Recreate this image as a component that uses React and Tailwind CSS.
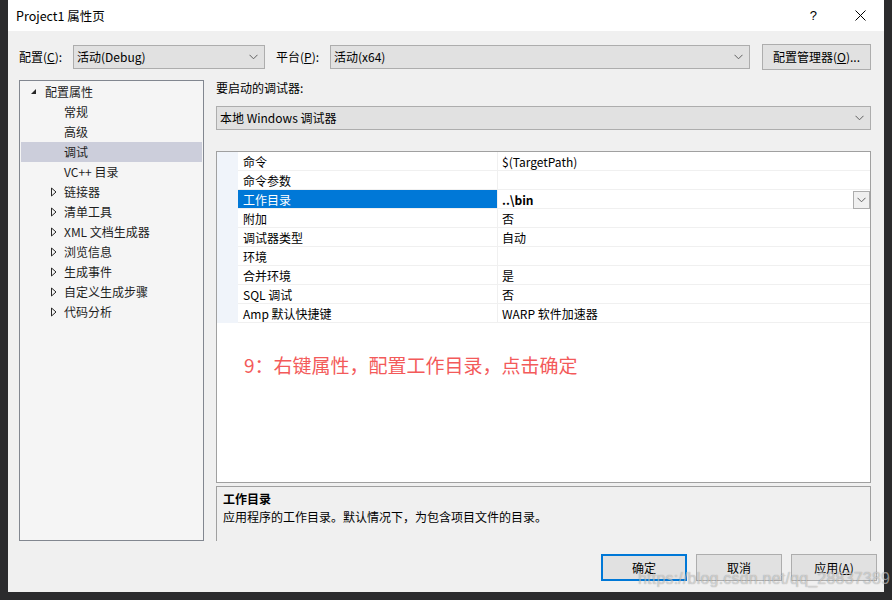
import React from "react";

const F = { fontFamily: '"Noto Sans CJK SC", "Noto Sans", sans-serif' };

function Chevron({ className = "" }) {
  return (
    <svg width="9" height="6" viewBox="0 0 9 6" className={className}>
      <path d="M0.5 0.8 L4.5 4.8 L8.5 0.8" fill="none" stroke="#606060" strokeWidth="1" />
    </svg>
  );
}

function Select({ text, w }) {
  return (
    <div className={`${w} h-[24px] border border-[#adadad] bg-[#e1e1e1] flex items-center justify-between pl-[3px] pr-[6px]`}>
      <span className="text-[12px] leading-[16px] text-black">{text}</span>
      <Chevron />
    </div>
  );
}

function Expanded() {
  return (
    <svg width="8" height="8" viewBox="0 0 8 8">
      <path d="M6 1 L6 6 L1 6 Z" fill="#262626" />
    </svg>
  );
}
function Collapsed() {
  return (
    <svg width="8" height="10" viewBox="0 0 8 10">
      <path d="M1.5 1 L6 5 L1.5 9 Z" fill="none" stroke="#262626" strokeWidth="1" />
    </svg>
  );
}

const tree = [
  { t: "配置属性", lvl: 0, ic: "exp" },
  { t: "常规", lvl: 1 },
  { t: "高级", lvl: 1 },
  { t: "调试", lvl: 1, sel: true },
  { t: "VC++ 目录", lvl: 1 },
  { t: "链接器", lvl: 1, ic: "col" },
  { t: "清单工具", lvl: 1, ic: "col" },
  { t: "XML 文档生成器", lvl: 1, ic: "col" },
  { t: "浏览信息", lvl: 1, ic: "col" },
  { t: "生成事件", lvl: 1, ic: "col" },
  { t: "自定义生成步骤", lvl: 1, ic: "col" },
  { t: "代码分析", lvl: 1, ic: "col" },
];

const props = [
  ["命令", "$(TargetPath)"],
  ["命令参数", ""],
  ["工作目录", "..\\bin", true],
  ["附加", "否"],
  ["调试器类型", "自动"],
  ["环境", ""],
  ["合并环境", "是"],
  ["SQL 调试", "否"],
  ["Amp 默认快捷键", "WARP 软件加速器"],
];

function Btn({ children, primary }) {
  return (
    <div
      className={`w-[86px] h-[27px] flex items-center justify-center text-[12px] text-black bg-[#e1e1e1] ${
        primary ? "border-2 border-[#0078d7]" : "border border-[#adadad]"
      }`}
    >
      {children}
    </div>
  );
}

export default function App() {
  return (
    <div className="w-[892px] h-[600px] bg-[#2b2b2d] pl-[8px] overflow-hidden relative" style={F}>
      <div className="w-[876px] h-[592px] flex flex-col bg-[#f0f0f0]">
        {/* title bar */}
        <div className="h-[31px] bg-white flex items-center pl-[8px] shrink-0">
          <span className="text-[12.5px] text-black leading-[16px]">Project1 属性页</span>
          <div className="flex-1" />
          <span className="text-[13px] text-black mr-[38px]" style={{ fontFamily: '"Liberation Sans", sans-serif' }}>?</span>
          <svg width="11" height="11" viewBox="0 0 11 11" className="mr-[18px]">
            <path d="M0.5 0.5 L10.5 10.5 M10.5 0.5 L0.5 10.5" stroke="#000" strokeWidth="1" />
          </svg>
        </div>

        {/* body */}
        <div className="flex-1 flex flex-col pl-[11px] pr-[13px] pt-[13px]">
          {/* top row */}
          <div className="h-[26px] flex items-center">
            <span className="w-[54px] text-[12px] text-black">
              配置(<span className="underline">C</span>):
            </span>
            <Select text="活动(Debug)" w="w-[192px]" />
            <span className="w-[54px] ml-[11px] text-[12px] text-black">
              平台(<span className="underline">P</span>):
            </span>
            <Select text="活动(x64)" w="w-[420px]" />
            <div className="ml-[12px] w-[109px] h-[26px] border border-[#adadad] bg-[#e1e1e1] flex items-center justify-center text-[12px] text-black">
              配置管理器(<span className="underline">O</span>)...
            </div>
          </div>

          {/* main */}
          <div className="mt-[10px] h-[461px] flex">
            {/* tree */}
            <div className="w-[186px] h-full border border-[#828790] bg-[#f5f5f5] p-px">
              {tree.map((it, i) => (
                <div
                  key={i}
                  className={`h-[20px] flex items-center relative ${it.sel ? "bg-[#cccedb]" : ""}`}
                >
                  {it.ic === "exp" && (
                    <span className="absolute left-[9px] top-[6px]">
                      <Expanded />
                    </span>
                  )}
                  {it.ic === "col" && (
                    <span className="absolute left-[29px] top-[5px]">
                      <Collapsed />
                    </span>
                  )}
                  <span
                    className={`text-[12px] leading-[16px] text-[#1e1e1e] ${it.lvl === 0 ? "ml-[24px]" : "ml-[43px]"}`}
                  >
                    {it.t}
                  </span>
                </div>
              ))}
            </div>

            {/* right */}
            <div className="ml-[12px] w-[655px] flex flex-col">
              <div className="h-[16px] text-[12px] leading-[16px] text-black">要启动的调试器:</div>
              <div className="mt-[10px]">
                <Select text="本地 Windows 调试器" w="w-[655px]" />
              </div>
              <div className="mt-[21px] h-[332px] border border-[#a0a0a0] bg-white flex flex-col">
                {props.map(([n, v, sel], i) => (
                  <div key={i} className="h-[19px] flex">
                    <div className="w-[21px] bg-[#f0f4fa]" />
                    <div
                      className={`w-[260px] border-b border-r border-[#f0f0f0] flex items-center pl-[5px] pt-px text-[12px] leading-[16px] ${
                        sel ? "bg-[#0078d7] text-white" : "text-black"
                      }`}
                    >
                      {n}
                    </div>
                    <div className="flex-1 border-b border-[#f0f0f0] flex items-center pl-[4px] pt-px text-[12px] leading-[16px] text-black">
                      <span className={sel ? "font-bold" : ""}>{v}</span>
                      {sel && (
                        <>
                          <div className="flex-1" />
                          <div className="w-[17px] h-[18px] border border-[#adadad] bg-[#f0f0f0] flex items-center justify-center">
                            <Chevron />
                          </div>
                        </>
                      )}
                    </div>
                  </div>
                ))}
                <div className="flex-1 relative">
                  <div className="ml-[27px] mt-[30px] text-[19px] leading-[24px] text-[#f35a5a]">
                    9：右键属性，配置工作目录，点击确定
                  </div>
                </div>
              </div>
              <div className="mt-[3px] flex-1 border border-b-0 border-[#a0a0a0] bg-[#f0f0f0] pl-[6px] pt-[3px]">
                <div className="text-[12px] leading-[18px] font-bold text-black">工作目录</div>
                <div className="text-[12px] leading-[18px] text-black">应用程序的工作目录。默认情况下，为包含项目文件的目录。</div>
              </div>
            </div>
          </div>

          {/* buttons */}
          <div className="mt-[13px] flex justify-end gap-[9px]">
            <Btn primary>确定</Btn>
            <Btn>取消</Btn>
            <div className="mr-[-6px]">
              <Btn>
                应用(<span className="underline">A</span>)
              </Btn>
            </div>
          </div>
        </div>
      </div>
      <div
        className="absolute left-[638px] top-[569px] text-[16px] leading-[20px] text-white/50 tracking-[0.2px]"
        style={{ fontFamily: '"Liberation Sans", sans-serif', textShadow: "0 0 1px rgba(0,0,0,0.4)" }}
      >
        https://blog.csdn.net/qq_28837389
      </div>
    </div>
  );
}
